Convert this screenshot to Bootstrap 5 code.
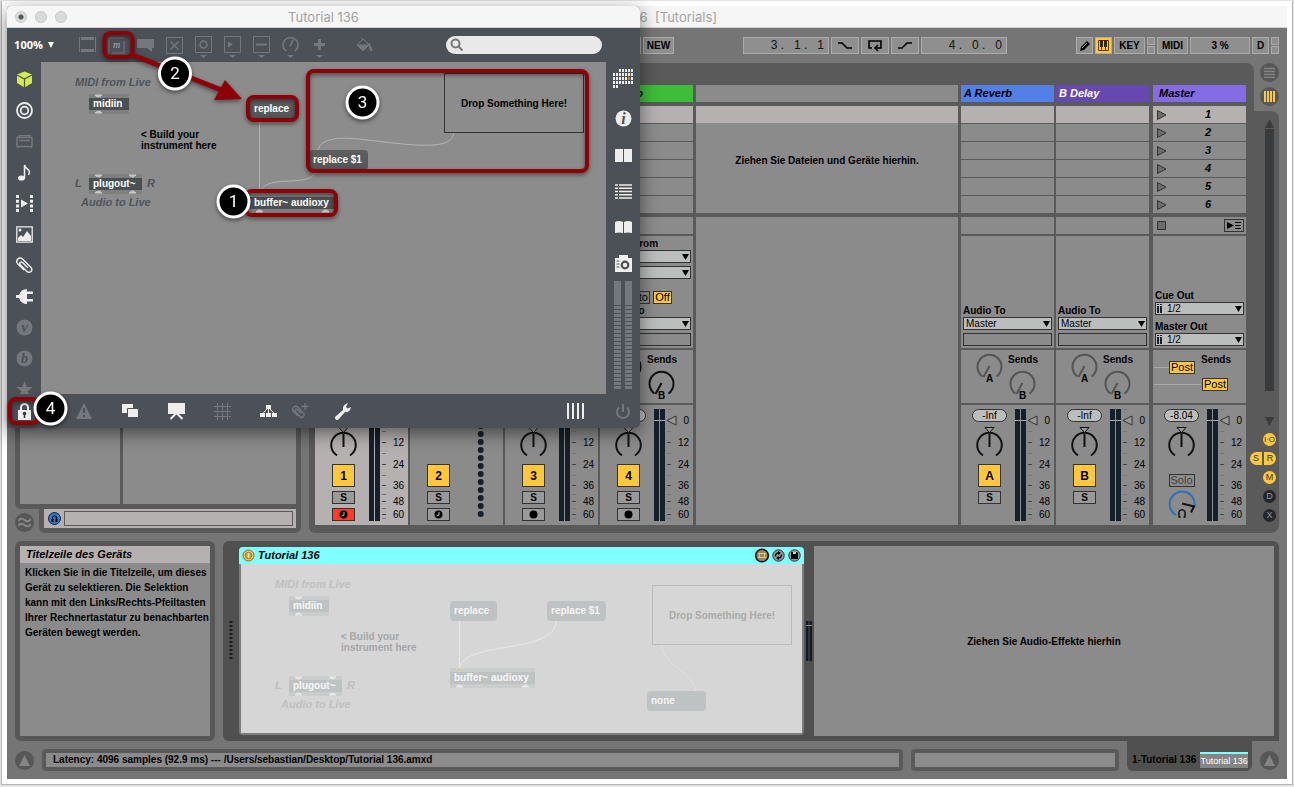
<!DOCTYPE html>
<html lang="de">
<head>
<meta charset="utf-8">
<meta name="viewport" content="width=device-width, initial-scale=1">
<title>Tutorial 136 [Tutorials]</title>
<link href="https://cdn.jsdelivr.net/npm/bootstrap@5.3.0/dist/css/bootstrap.min.css" rel="stylesheet">
<style>
  :root { --bar:#757575; --panel:#5a5a5a; --cell:#8b8b8b; --sel:#b5b1b0; --amber:#ffc83c; --slate:#4c5057; --dim:#74787c; --red:#8e0009; }
  body { background:#e2e2e2; font:bold 10px/11px "Liberation Sans", Arial, sans-serif; color:#000; overflow-x:hidden; }
  button, select, input { font:inherit; color:inherit; padding:0; border:0; background:none; border-radius:0; }
  button { line-height:1; display:flex; align-items:center; justify-content:center; }
  svg { display:block; flex:none; }
  .frame { margin:1px 1px 2px; padding:5px; min-height:calc(100vh - 3px); background:#fff; border:1px solid #b5b5b5; border-top:0; }
  .live { background:var(--bar); }
  .titlebar { height:22px; background:#f6f6f6; border-bottom:1px solid #d0d0d0; font:13px/22px Inter, Roboto, sans-serif; color:#a3a3a3; white-space:pre; }
  .ctl { height:35px; padding-right:8px; gap:2px; }
  .tb { height:17px; border:1px solid #ababab; background:#8f8f8f; font-size:10px; }
  .w17 { width:17px; } .w28 { width:28px; } .w31 { width:31px; } .w60 { width:60px; } .w86 { width:86px; }
  .gapafter { margin-right:67px; }
  .digits { font:12px/15px "Liberation Sans", sans-serif; color:#111; white-space:pre; }
  .mini { width:8px; gap:1px; }
  .mini i { height:8px; border:1px solid #ababab; background:#8f8f8f; }
  .amber { background:var(--amber); }
  .pan { background:var(--panel); }

  .browser { width:286px; }
  .brow-top { padding:5px; gap:3px; border-radius:6px 6px 0 6px; }
  .brow-low { margin-left:5px; padding:0 5px 5px; border-radius:0 0 6px 6px; }
  .preview { height:19px; padding:2px 3px 2px 4px; gap:3px; background:var(--sel); }
  .preview input { height:15px; min-width:0; border:1px solid var(--panel); background:var(--sel); }
  .rnd { width:19px; height:19px; border-radius:50%; background:#575757; }
  .cellbg { background:var(--cell); }

  .session { padding:22px 8px 8px 6px; border-radius:6px 8px 0 6px; gap:2px; }
  .strip { width:93px; }
  .strip.on > .mixer { background:var(--sel); }
  .hd { height:17px; padding:0 3px; font:italic bold 11px/17px "Liberation Sans", sans-serif; margin-bottom:4px; }
  .hd.master { padding-left:6px; }
  .slots { gap:1px; margin-bottom:4px; }
  .slot { height:17px; background:var(--cell); padding:0 4px; }
  .slot:first-child { background:var(--sel); }
  .slot span { font:italic bold 11px/17px "Liberation Sans", sans-serif; padding-right:31px; }
  .cliparea { height:107px; margin-bottom:4px; }
  .cliparea > .first { height:17px; background:var(--sel); }
  .cliparea > .hint { height:74px; }
  .stop { height:17px; background:var(--cell); margin-bottom:2px; padding:0 2px 0 4px; }
  .io { background:var(--cell); padding:2px; margin-bottom:2px; min-height:112px; }
  .io label { display:block; height:12px; line-height:11px; white-space:nowrap; }
  .io select { appearance:none; display:block; width:100%; height:13px; padding:0 12px 0 2px; border:1px solid #333; font-weight:normal; line-height:11px;
    background:#bcbebd url("data:image/svg+xml,%3Csvg xmlns='http://www.w3.org/2000/svg' width='7' height='6'%3E%3Cpath d='M0 0h7L3.5 6z'/%3E%3C/svg%3E") no-repeat right 1px center; }
  .io select.st { padding-left:11px;
    background-image:url("data:image/svg+xml,%3Csvg xmlns='http://www.w3.org/2000/svg' width='7' height='6'%3E%3Cpath d='M0 0h7L3.5 6z'/%3E%3C/svg%3E"), url("data:image/svg+xml,%3Csvg xmlns='http://www.w3.org/2000/svg' width='5' height='9'%3E%3Cpath d='M0 0h2v1H0zM3 0h2v1H3zM0 2h2v7H0zM3 2h2v7H3z' fill='%23182028'/%3E%3C/svg%3E");
    background-position:right 1px center, 1px center; background-repeat:no-repeat; }
  .emptybox { height:13px; border:1px solid #333; }
  .sb { height:13px; border:1px solid #333; font-weight:normal; font-size:11px; }
  .sends { height:53px; background:var(--cell); margin-bottom:2px; }
  .mixer { height:120px; background:var(--cell); padding-top:4px; }
  .mixleft { width:57px; margin-right:-4px; }
  .pill { width:35px; height:13px; border:1px solid #333; border-radius:7px; background:#bcbebd; font:10px/11px "Liberation Sans", sans-serif; text-align:center; }
  .num { width:23px; height:23px; border:1px solid #333; background:var(--amber); font-size:12px; margin-top:5px; }
  .s2 { width:23px; height:13px; border:1px solid #333; background:#999; margin-top:4px; font-size:10px; }
  .drop { margin:0 1px; }

  .side { width:25px; }
  .views { height:48px; gap:5px; }
  .rail { padding-right:3px; border-radius:0 8px 8px 0; }
  .rail .arrow { margin-right:2px; }
  .track { width:9px; min-height:200px; background:#3a3b3d; margin:1px 2px 2px 0; }
  .dot { width:13px; height:13px; border-radius:50%; background:var(--amber); font:9px/13px "Liberation Sans", sans-serif; color:#333; }
  .dot.off { background:#23262a; color:#999; }
  .dot.io3 { font-size:8px; }
  .dot.half { width:12px; border-radius:7px 0 0 7px; }
  .dot.half + .half { border-radius:0 7px 7px 0; }
  .rail .rowx { height:19px; gap:2px; width:26px; }

  .info { width:200px; height:200px; padding:5px; border-radius:6px; background:#575757; }
  .info h2 { font:italic bold 11px/17px "Liberation Sans", sans-serif; background:var(--sel); padding:0 6px; margin:0; }
  .info p { line-height:15px; padding:2px 0 0 5px; margin:0; white-space:pre-line; }
  .devices { height:200px; padding:5px 5px 5px 6px; border-radius:6px 6px 0 6px; background:#505050; }
  .device { width:565px; border-radius:4px; background:#7d7d7d; padding:0 2px 2px; margin:1px 0; }
  .device .head { height:17px; margin:0 -2px; padding:0 3px; background:#7fffff; border-radius:4px 4px 0 0; font:italic bold 11px/17px "Liberation Sans", sans-serif; gap:3px; }
  .patch { position:relative; overflow:hidden; }
  .patch > * { position:absolute; white-space:nowrap; }
  .devbody { background:#d6d6d6; }

  .status { height:38px; padding-left:8px; }
  .status .rnd { margin-top:10px; }
  .sbox { height:22px; padding:4px; border-radius:4px; }
  .sbox > div { height:14px; line-height:14px; padding:0 7px; white-space:nowrap; }
  .tab { width:125px; height:30px; padding:11px 4px 0 5px; border-radius:0 0 6px 6px; background:#505050; gap:4px; line-height:16px; white-space:nowrap; }
  .tab b { height:16px; width:48px; border-top:2px solid #7fffff; background:#858585; color:#fff; font:9px/14px "Liberation Sans", sans-serif; text-align:center; }

  .maxwin { position:absolute; left:7px; top:6px; width:633px; height:422px; background:var(--slate); border-radius:4px 5px 5px 0; box-shadow:0 5px 18px rgba(0,0,0,.5); }
  .maxwin .titlebar { border-radius:4px 5px 0 0; position:relative; }
  .lights { position:absolute; left:8px; top:5px; gap:8px; }
  .lights i { width:12px; height:12px; border-radius:50%; background:#dadada; border:1px solid #c8c8c8; }
  .lights i:first-child { background:radial-gradient(#555 0 2px,#dadada 3px); }
  .tools { height:34px; color:var(--dim); }
  .tools button { width:29px; height:34px; }
  .tools .zoomb { width:54px; color:#fff; font:bold 11px/12px "Open Sans", sans-serif; gap:5px; margin-right:12px; }
  .find { width:156px; height:18px; border-radius:9px; background:#e9e9e9; padding:0 4px; margin-right:38px; }
  .find input { min-width:0; outline:0; }
  .lside { width:34px; padding-top:2px; overflow:hidden; height:332px; color:#eee; }
  .lside button { width:34px; height:31px; flex:none; }
  .rside { width:34px; padding-top:7px; gap:22px; color:#eee; }
  .rside .meter { margin-top:-13px; }
  .canvas { background:#8c8c8c; }
  .bot { height:34px; color:#eee; }
  .bot button { width:46px; height:34px; flex:none; }
  .bot .narrow { width:34px; }
  .bot .tight { width:18px; }
  .dimc { color:var(--dim) !important; }
  .note { font-size:11px; font-style:italic; color:#50545c; }
  .obj { height:20px; padding:0 4px; line-height:12px; color:#fff; border:solid #7f7f7f; border-width:4px 0; background:#4a5052; }
  .msg { height:20px; padding:0 4px; line-height:20px; color:#fff; border-radius:4px; background:linear-gradient(#5f5f5f,#525556); }
  .dropbox { border:1px solid #333; display:flex; align-items:center; justify-content:center; }
  .devbody .note { color:#bfc0c2; }
  .devbody .obj, .devbody .msg { background:#bfc2c2; border-color:#cbcccc; color:#f6f6f6; }
  .devbody .dropbox { color:#aaa; border-color:#bbb; }
  .over { position:absolute; left:0; top:0; overflow:visible; pointer-events:none; filter:drop-shadow(0 2px 2px rgba(0,0,0,.5)); }
</style>
</head>
<body>
<div class="frame d-flex position-relative">
<main class="live flex-grow-1 d-flex flex-column">
  <div class="titlebar text-center">Tutorial 136  [Tutorials]</div>

  <div class="ctl d-flex align-items-center justify-content-end">
    <button class="tb w31" aria-label="Quantize"></button>
    <button class="tb w31 gapafter">NEW</button>
    <div class="tb w86 digits d-flex justify-content-end pe-1">3 .   1 .   1</div>
    <button class="tb w28" aria-label="Punch In"><svg width="16" height="8" fill="none" stroke="#000" stroke-width="1.6"><path d="M1 1h4l5 5h5"/></svg></button>
    <button class="tb w28" aria-label="Loop"><svg width="14" height="13" fill="none" stroke="#000" stroke-width="1.6"><path d="M4 9H1V2h12v7H8M10 6 7 9l3 3"/></svg></button>
    <button class="tb w28" aria-label="Punch Out"><svg width="16" height="8" fill="none" stroke="#000" stroke-width="1.6"><path d="M1 6h4l5-5h5"/></svg></button>
    <div class="tb w86 digits d-flex justify-content-end pe-1 gapafter">4 .   0 .   0</div>
    <button class="tb w17" aria-label="Draw"><svg width="12" height="12"><path d="M1 11l1-4 6-6 3 3-6 6z"/><path d="M3 8l5-5" stroke="#aaa"/></svg></button>
    <button class="tb w17 amber" aria-label="Computer Keyboard"><svg width="11" height="11"><path d="M.5.5h10v10H.5zM3.500 0v11M7.500 0v11" fill="none" stroke="#5a3c00"/><path d="M2 0h3v7H2zM6 0h3v7H6z" fill="#3a2800"/></svg></button>
    <button class="tb w31">KEY</button>
    <span class="mini d-flex flex-column"><i></i><i></i></span>
    <button class="tb w31">MIDI</button>
    <div class="tb w60 text-center lh-base">3 %</div>
    <button class="tb w17">D</button>
    <span class="mini d-flex flex-column"><i></i><i></i></span>
  </div>

  <div class="d-flex flex-grow-1 ps-2 pe-2 gap-2">
    <section class="browser d-flex flex-column flex-shrink-0">
      <div class="brow-top pan flex-grow-1 d-flex"><div class="cellbg" style="width:100px"></div><div class="cellbg flex-grow-1"></div></div>
      <div class="d-flex">
        <button class="rnd mt-1" aria-label="Groove Pool"><svg width="13" height="11" fill="none" stroke="#858585" stroke-width="2"><path d="M0 4q3-4 6.500-1T13 2M0 9q3-4 6.500-1T13 7"/></svg></button>
        <div class="brow-low pan flex-grow-1">
          <div class="preview d-flex align-items-center">
            <button aria-label="Preview"><svg width="13" height="13"><circle cx="6.500" cy="6.500" r="6" fill="#2f76cc" stroke="#123"/><path d="M4.500 8.500V6a2 2 0 0 1 4 0v2.500" fill="none" stroke="#111" stroke-width="1.200"/><path d="M3.500 7h2v3h-2zM7.500 7h2v3h-2z" fill="#111"/></svg></button>
            <input class="flex-grow-1" aria-label="Preview file">
          </div>
        </div>
      </div>
    </section>

    <section class="d-flex flex-grow-1">
      <div class="session pan d-flex flex-grow-1" id="session"></div>
      <div class="side d-flex flex-column">
        <div class="views d-flex flex-column align-items-end">
          <button class="rnd" aria-label="Arrangement"><svg width="11" height="11" stroke="#858585" stroke-width="1.500"><path d="M0 1.500h11M0 4.500h11M0 7.500h11M0 10.500h11"/></svg></button>
          <button class="rnd" aria-label="Session"><svg width="11" height="11" stroke="#ffc83c" stroke-width="2"><path d="M1 0v11M4 0v11M7 0v11M10 0v11"/></svg></button>
        </div>
        <div class="rail pan flex-grow-1 d-flex flex-column align-items-end">
          <svg class="arrow mt-2" width="9" height="9"><path d="M4.500 0 9 9H0z" fill="#3a3b3d"/></svg>
          <div class="track flex-grow-1"></div>
          <svg class="arrow mt-4 mb-1" width="9" height="9"><path d="M4.500 9 9 0H0z" fill="#3a3b3d"/></svg>
          <div class="rowx d-flex align-items-center justify-content-end"><button class="dot io3">I·O</button></div>
          <div class="rowx d-flex align-items-center justify-content-end"><button class="dot half">S</button><button class="dot half">R</button></div>
          <div class="rowx d-flex align-items-center justify-content-end"><button class="dot">M</button></div>
          <div class="rowx d-flex align-items-center justify-content-end"><button class="dot off">D</button></div>
          <div class="rowx d-flex align-items-center justify-content-end mb-2"><button class="dot off">X</button></div>
        </div>
      </div>
    </section>
  </div>

  <div class="d-flex ps-2 pe-2 pt-2 gap-2">
    <section class="info flex-shrink-0"><div class="cellbg h-100"><h2>Titelzeile des Geräts</h2>
<p>Klicken Sie in die Titelzeile, um dieses
Gerät zu selektieren. Die Selektion
kann mit den Links/Rechts-Pfeiltasten
Ihrer Rechnertastatur zu benachbarten
Geräten bewegt werden.</p></div></section>
    <section class="devices flex-grow-1 d-flex">
      <svg class="align-self-center" width="4" height="40" style="margin-right:6px"><path d="M2 0v40" stroke="#181c20" stroke-width="3" stroke-dasharray="2 2"/></svg>
      <div class="device d-flex flex-column flex-shrink-0">
        <div class="head d-flex align-items-center">
          <button aria-label="Device On"><svg width="13" height="13"><circle cx="6.500" cy="6.500" r="5.500" fill="#ffc83c" stroke="#765"/><circle cx="6.500" cy="6.500" r="3.200" fill="#c4a264" stroke="#98794a"/><path d="M6.500 4v5" stroke="#ffe9a0" stroke-width="1.500"/></svg></button>
          <span class="flex-grow-1">Tutorial 136</span>
          <button aria-label="Edit"><svg width="14" height="15"><circle cx="7" cy="7.500" r="6.300" fill="#8f8678" stroke="#111" stroke-width="1.500"/><path d="M4.500 5.500h5v4h-5zM3 5.500h8M3 9.500h8" fill="none" stroke="#ffc83c"/></svg></button>
          <button aria-label="Hot-Swap"><svg width="13" height="13"><circle cx="6.500" cy="6.500" r="5.700" fill="#999" stroke="#333"/><path d="M3.500 7.500q0-3.500 3-3.500M9.500 5.500q0 3.500-3 3.500" fill="none" stroke="#111" stroke-width="1.400"/><path d="M6 2v4l3-2zM7 7v4L4 9z"/></svg></button>
          <button aria-label="Save Preset"><svg width="13" height="13"><circle cx="6.500" cy="6.500" r="5.700" fill="#999" stroke="#333"/><path d="M3 3h6l1 1v6H3z"/><path d="M5 3h3v2H5z" fill="#ccc"/></svg></button>
        </div>
        <div class="devbody patch flex-grow-1">
          <svg style="left:0;top:0" width="561" height="168" viewBox="241 564 561 168" fill="none" stroke="#e8e8e8"><path d="M459.500 620v48M556.500 621C554 655 465 640 459.500 668"/><path d="M661.500 645c2 22 34 28 34 46" stroke="#e2e2e2"/></svg>
          <span class="note" style="left:34px;top:15px">MIDI from Live</span>
          <span class="obj" style="left:48px;top:32px;width:40px">midiin</span>
          <span style="left:100px;top:67px;color:#a6a6a6">&lt; Build your<br>instrument here</span>
          <span class="note" style="left:34px;top:116px">L</span>
          <span class="obj" style="left:48px;top:112px;width:53px">plugout~</span>
          <span class="note" style="left:106px;top:116px">R</span>
          <span class="note" style="left:40px;top:135px">Audio to Live</span>
          <span class="msg" style="left:209px;top:37px;width:47px">replace</span>
          <span class="msg" style="left:306px;top:37px;width:59px">replace $1</span>
          <span class="obj" style="left:209px;top:104px;width:85px">buffer~ audioxy</span>
          <div class="dropbox" style="left:411px;top:21px;width:140px;height:60px">Drop Something Here!</div>
          <span class="msg" style="left:406px;top:127px;width:59px">none</span>
          <svg style="left:0;top:0" width="561" height="168" viewBox="241 564 561 168" fill="#e6e8ea"><path d="M295 597h7q-3.500 4-7 0zM295 615h7q-3.500-4-7 0zM295 677h7q-3.500 4-7 0zM329 677h7q-3.500 4-7 0zM295 695h7q-3.500-4-7 0zM329 695h7q-3.500-4-7 0zM456 687h7q-3.500-4-7 0zM522 687h7q-3.500-4-7 0z" stroke="#e6e8ea"/><path d="M456 669h7q-3.500 4-7 0z" fill="#b9b5a4" stroke="#e0d8c0"/></svg>
        </div>
      </div>
      <svg width="6" height="40" class="align-self-center" style="margin:0 2px"><path d="M0 0h2.500v40H0zM3.500 0H6v40H3.500z" fill="#141b22"/><path d="M0 4.500h6" stroke="#888"/></svg>
      <div class="cellbg flex-grow-1 d-flex align-items-center justify-content-center">Ziehen Sie Audio-Effekte hierhin</div>
    </section>
  </div>

  <footer class="status d-flex align-items-start pe-2 gap-2">
    <button class="rnd" aria-label="Info View"><svg width="13" height="12"><path d="M6.500 0 12 11H1z" fill="#858585"/></svg></button>
    <div class="sbox pan flex-grow-1 mt-2"><div class="cellbg">Latency: 4096 samples (92.9 ms) --- /Users/sebastian/Desktop/Tutorial 136.amxd</div></div>
    <div class="sbox pan mt-2" style="width:208px"><div class="cellbg"></div></div>
    <div class="tab d-flex">1-Tutorial 136<b>Tutorial 136</b></div>
    <button class="rnd" aria-label="Device View"><svg width="13" height="12"><path d="M6.500 0 12 11H1z" fill="#858585"/></svg></button>
  </footer>
</main>
</div>

<div class="maxwin d-flex flex-column">
  <div class="titlebar text-center"><span class="lights d-flex"><i></i><i></i><i></i></span>Tutorial 136</div>
  <div class="tools d-flex align-items-center">
    <button class="zoomb">100% <svg width="6" height="6"><path d="M0 0h6L3 6z" fill="#fff"/></svg></button>
    <button aria-label="Object"><svg width="17" height="18" fill="none" stroke="currentColor"><path d="M.5 1v15M16.500 1v15"/><path d="M2 2.500h13M2 14.500h13" stroke-width="3"/></svg></button>
    <button aria-label="Message"><svg width="17" height="17"><path d="M1 16V1h15M16 4v12H4" fill="none" stroke="currentColor"/><text x="8.500" y="11" text-anchor="middle" font-family="Liberation Serif" font-style="italic" font-weight="400" font-size="10" fill="#aaa">m</text></svg></button>
    <button aria-label="Comment"><svg width="17" height="15"><path d="M0 1h17v9h-2v4l-5-4H0z" fill="currentColor"/></svg></button>
    <button aria-label="Toggle"><svg width="17" height="17" fill="none" stroke="currentColor"><path d="M.5.5h16v16H.5z"/><path d="M4.500 4.500l8 8M12.500 4.500l-8 8" stroke-width="1.500"/></svg></button>
    <button aria-label="Button"><svg width="17" height="26" fill="none" stroke="currentColor"><path d="M.5 4.500h16v16H.5z"/><circle cx="8.500" cy="12.500" r="3.500" stroke-width="1.500"/><path d="M5 23h7l-3.500 3z" fill="currentColor" stroke="none"/></svg></button>
    <button aria-label="Number"><svg width="17" height="26" fill="none" stroke="currentColor"><path d="M.5 4.500h16v16H.5z"/><path d="M4 9.500v6l5-3zM5 23h7l-3.500 3z" fill="currentColor" stroke="none"/></svg></button>
    <button aria-label="Slider"><svg width="17" height="26" fill="none" stroke="currentColor"><path d="M.5 4.500h16v16H.5z"/><path d="M3 12.500h11" stroke-width="2"/><path d="M5 23h7l-3.500 3z" fill="currentColor" stroke="none"/></svg></button>
    <button aria-label="Dial"><svg width="17" height="26" fill="none" stroke="currentColor" stroke-width="1.700"><path d="M4 19a7.500 7.500 0 1 1 9 0M8 14.500l3-7"/><path d="M5 23h7l-3.500 3z" fill="currentColor" stroke="none"/></svg></button>
    <button aria-label="Add"><svg width="17" height="26" fill="none" stroke="currentColor" stroke-width="3"><path d="M8.500 7v11M3 12.500h11"/><path d="M5 23h7l-3.500 3z" fill="currentColor" stroke="none"/></svg></button>
    <button class="ms-3" aria-label="Format"><svg width="17" height="16"><path d="M1 8l6-6 6 6-6 6z" fill="none" stroke="currentColor"/><path d="M1 8h12l-6 6zM13 6q3 5 3 7t-2 0zM5 0l3 3" fill="currentColor" stroke="currentColor" stroke-width=".8"/></svg></button>
    <label class="find d-flex align-items-center ms-auto"><svg width="14" height="14" fill="none" stroke="#777" stroke-width="2"><circle cx="5.500" cy="5.500" r="4"/><path d="M8.500 8.500l4 4"/></svg><input class="flex-grow-1" type="text" aria-label="Search"></label>
  </div>
  <div class="d-flex flex-grow-1">
    <div class="lside d-flex flex-column">
      <button aria-label="Packages"><svg width="17" height="17"><path d="M8.500.5l7.500 3v8.500l-7.500 4.500L1 12V3.500z" fill="#d3ec4b"/><path d="M1 4l7.500 4L16 4M8.500 8v9" fill="none" stroke="#4c5057" stroke-width="1.200"/></svg></button>
      <button aria-label="Target"><svg width="17" height="17" fill="none" stroke="currentColor" stroke-width="1.800"><circle cx="8.500" cy="8.500" r="7.500"/><circle cx="8.500" cy="8.500" r="3.800"/></svg></button>
      <button class="dimc" aria-label="Amp"><svg width="17" height="13" fill="none" stroke="currentColor"><path d="M1 2.500h15v9H1zM3 2V.5h11V2M3 5.500h11M2 11v2M15 11v2" stroke-width="1.500"/></svg></button>
      <button aria-label="Audio"><svg width="14" height="17"><ellipse cx="4.500" cy="14" rx="3.500" ry="2.600" fill="currentColor"/><path d="M7.500 14V1q1 3 3.500 4.500T11.500 11" fill="none" stroke="currentColor" stroke-width="1.500"/></svg></button>
      <button aria-label="Video"><svg width="17" height="17"><path d="M1.500 0v17M15.500 0v17" stroke="currentColor" stroke-width="3" stroke-dasharray="3 1.700"/><path d="M5 4.500v8l7-4z" fill="currentColor"/></svg></button>
      <button aria-label="Images"><svg width="17" height="17"><path d="M.8.800h15.400v15.400H.8z" fill="none" stroke="currentColor" stroke-width="1.300"/><circle cx="4" cy="4" r="1.500" fill="currentColor"/><path d="M2 15v-3l3-3 2 2 4-6 4 5v5z" fill="currentColor"/></svg></button>
      <button aria-label="Attachments"><svg width="17" height="17" fill="none" stroke="currentColor" stroke-width="1.500"><path d="M12 11 6.500 5.500a1.600 1.600 0 0 0-2.300 2.300L11 14.500a2.800 2.800 0 0 0 4-4L6.500 2A3.400 3.400 0 0 0 1.700 6.800L8 13"/></svg></button>
      <button aria-label="Plug-ins"><svg width="17" height="17" fill="currentColor"><path d="M0 7h3q2-6 8-6v15q-6 0-8-6H0zM11 3.500h6v2.500h-6zM11 11h6v2.500h-6z"/></svg></button>
      <button class="dimc" aria-label="Vizzie"><svg width="17" height="17"><circle cx="8.500" cy="8.500" r="8" fill="currentColor"/><text x="8.500" y="13" text-anchor="middle" font-family="Liberation Serif" font-style="italic" font-size="14" fill="#4c5057">v</text></svg></button>
      <button class="dimc" aria-label="Beap"><svg width="17" height="17"><circle cx="8.500" cy="8.500" r="8" fill="currentColor"/><text x="8.500" y="13" text-anchor="middle" font-family="Liberation Serif" font-style="italic" font-size="14" fill="#4c5057">b</text></svg></button>
      <button class="dimc" aria-label="Favourites"><svg width="17" height="17"><path d="M8.500 0l2.300 6h6l-5 4 2 6-5.300-3.600L3.200 16l2-6-5-4h6z" fill="currentColor"/></svg></button>
    </div>
    <div class="canvas patch flex-grow-1">
      <svg style="left:0;top:0" width="565" height="332" viewBox="41 62 565 332" fill="none" stroke="#b4b4b4"><path d="M259.500 120v73M453.500 133C453 160 355 133 334 139Q320 141 318 150M316 170C312 190 264 172 260 193"/></svg>
      <span class="note" style="left:34px;top:15px">MIDI from Live</span>
      <span class="obj" style="left:48px;top:32px;width:40px">midiin</span>
      <span style="left:100px;top:67px">&lt; Build your<br>instrument here</span>
      <span class="note" style="left:34px;top:116px">L</span>
      <span class="obj" style="left:48px;top:112px;width:53px">plugout~</span>
      <span class="note" style="left:106px;top:116px">R</span>
      <span class="note" style="left:40px;top:135px">Audio to Live</span>
      <span class="msg" style="left:209px;top:37px;width:47px">replace</span>
      <span class="msg" style="left:268px;top:88px;width:59px">replace $1</span>
      <span class="obj" style="left:209px;top:131px;width:84px">buffer~ audioxy</span>
      <div class="dropbox" style="left:403px;top:11px;width:140px;height:60px">Drop Something Here!</div>
      <svg style="left:0;top:0" width="565" height="332" viewBox="41 62 565 332" fill="#c8c8c8"><path d="M95 95h7q-3.500 4-7 0zM95 113h7q-3.500-4-7 0zM95 175h7q-3.500 4-7 0zM129 175h7q-3.500 4-7 0zM95 193h7q-3.500-4-7 0zM129 193h7q-3.500-4-7 0zM256 212h7q-3.500-4-7 0zM322 212h7q-3.500-4-7 0z" stroke="#c8c8c8"/></svg>
    </div>
    <div class="rside d-flex flex-column align-items-center">
      <button aria-label="Grid"><svg width="20" height="19"><path d="M6 1.500h14M0 5.500h20M0 9.500h20M0 13.500h20M0 17.500h5" stroke="currentColor" stroke-width="3" stroke-dasharray="2 1"/><path d="M15 8h2v3h-2z" fill="#c08a20"/></svg></button>
      <button aria-label="Inspector"><svg width="17" height="17"><circle cx="8.500" cy="8.500" r="8" fill="currentColor"/><text x="8.500" y="14" text-anchor="middle" font-family="Liberation Serif" font-style="italic" font-weight="bold" font-size="16" fill="#4c5057">i</text></svg></button>
      <button aria-label="Reference"><svg width="17" height="13"><path d="M0 0h8v13H0zM9 0h8v13H9z" fill="currentColor"/></svg></button>
      <button aria-label="Console"><svg width="17" height="15" stroke="currentColor" stroke-width="1.500"><path d="M0 1h3M4 1h13M0 4.200h3M4 4.200h13M0 7.500h3M4 7.500h13M0 10.700h3M4 10.700h13M0 14h3M4 14h13"/></svg></button>
      <button aria-label="Lessons"><svg width="17" height="12"><path d="M0 1q4-2 8 0v11q-4-1-8 0zM9 1q4-2 8 0v11q-4-1-8 0z" fill="currentColor"/></svg></button>
      <button aria-label="Snapshots"><svg width="17" height="17"><path d="M4 0h9v3h4v14H0V3h4z" fill="currentColor"/><circle cx="10" cy="10" r="3.300" fill="none" stroke="#4c5057" stroke-width="2.200"/><path d="M1.500 6h3M1.500 9h3M1.500 12h3" stroke="#4c5057"/></svg></button>
      <svg class="meter" width="18" height="109" fill="#74787c"><path d="M0 0h7v24H0zM11 0h7v24h-7z"/><path d="M3.500 25v84M14.500 25v84" stroke="#74787c" stroke-width="7" stroke-dasharray="3 1"/></svg>
    </div>
  </div>
  <div class="bot d-flex align-items-center">
    <button class="narrow" aria-label="Lock" style="margin-right:20px"><svg width="13" height="17"><path d="M0 7h13v10H0z" fill="currentColor"/><path d="M3 8V4.500a3.500 3.500 0 0 1 7 0V8" fill="none" stroke="currentColor" stroke-width="2"/><circle cx="6.500" cy="10.500" r="1.700" fill="#333"/><path d="M6.500 10v5" stroke="#333" stroke-width="1.500"/></svg></button>
    <button class="dimc" aria-label="Errors"><svg width="16" height="16"><path d="M8 0l8 16H0z" fill="currentColor"/><path d="M8 5v5M8 12v2" stroke="#4c5057" stroke-width="2"/></svg></button>
    <button aria-label="Windows"><svg width="17" height="15"><path d="M0 0h11v9H0z" fill="currentColor"/><path d="M5.500 4.500h11v9h-11z" fill="currentColor" stroke="#4c5057"/></svg></button>
    <button aria-label="Presentation"><svg width="17" height="17"><path d="M0 0h17v11H0z" fill="currentColor"/><path d="M8.500 10l-6 6M8.500 10l6 6" stroke="currentColor" stroke-width="2"/></svg></button>
    <button class="dimc" aria-label="Snap"><svg width="17" height="17" stroke="currentColor"><path d="M3.500 0v17M8.500 0v17M13.500 0v17M0 3.500h17M0 8.500h17M0 13.500h17"/></svg></button>
    <button aria-label="Connections"><svg width="17" height="13"><path d="M6 0h5v4H6zM0 8h5v4H0zM6 8h5v4H6zM12 8h5v4h-5z" fill="currentColor"/><path d="M8.500 3v6M7 4 2.500 9M10 4l4.500 5" stroke="currentColor"/></svg></button>
    <button class="dimc tight" aria-label="Attach"><svg width="17" height="18" fill="none" stroke="currentColor" stroke-width="1.300"><path d="M9 11 5.500 7.500a1.200 1.200 0 0 0-2 2L8 14.500a2.200 2.200 0 0 0 3.500-3L6 5.500A3 3 0 0 0 1.500 9.500L6 14M13 1v7M9.500 4.500h7"/></svg></button>
    <button class="tight ms-4" aria-label="Tools"><svg width="17" height="17"><path d="M1 14 9 7q-1-5 5-7l-2 4 1.500 1.500L17 4q-1 6-6 5l-7 8q-3 1-3-3z" fill="currentColor"/></svg></button>
    <button class="ms-auto me-2" aria-label="Transport"><svg width="17" height="16" stroke="currentColor" stroke-width="2"><path d="M1 0v16M6 0v16M11 0v16M16 0v16"/></svg></button>
    <button class="dimc narrow" aria-label="Power"><svg width="16" height="17" fill="none" stroke="currentColor" stroke-width="2"><path d="M4 4.500a6 6 0 1 0 8 0M8 1v8"/></svg></button>
  </div>

  <svg class="over" width="633" height="422" viewBox="7 6 633 422" fill="none" stroke="#8e0009" stroke-width="4">
    <rect x="104.500" y="33" width="28" height="24" rx="6"/>
    <rect x="248" y="97" width="49" height="23" rx="6"/>
    <rect x="308" y="71" width="279" height="100" rx="6"/>
    <rect x="246" y="191" width="90" height="24" rx="6"/>
    <rect x="10" y="399" width="28" height="24" rx="6"/>
    <path d="M130 54l94 37" stroke-width="5"/>
    <path d="M225 80l17 19-28 1z" fill="#8e0009" stroke="none"/>
    <g fill="#000" stroke="#fff" stroke-width="3"><circle cx="233.500" cy="201.500" r="15.500"/><circle cx="175" cy="73.500" r="15.500"/><circle cx="362.500" cy="102.500" r="15.500"/><circle cx="50.500" cy="408.500" r="15.500"/></g>
    <g fill="#fff" stroke="none" font-family="Roboto, sans-serif" font-weight="400" font-size="17" text-anchor="middle"><text x="233.500" y="207">1</text><text x="175" y="79">2</text><text x="362.500" y="108">3</text><text x="50.500" y="414">4</text></g>
  </svg>
</div>

<script>
  // Level scale next to every mixer meter: [dB label, y]
  const scale = () => {
    const marks = [[0,11],[12,33],[24,55],[36,76],[48,92],[60,105]];
    const minor = [0,22,44,66,85,99,109];
    return `<svg width="40" height="116"><path d="M1 0h5v112H1zM7 0h5v112H7z" fill="#16202a"/><path d="M1 11.500h11" stroke="#aaa"/>
      <path d="M23 7v9l-9-4.500z" fill="#999" stroke="#333"/>
      ${minor.map(y => `<path d="M14 ${y}.500h4" stroke="#777"/>`).join('')}
      ${marks.map(([n,y]) => `${n ? `<path d="M14 ${y}.500h4" stroke="#444"/>` : ''}<text x="36" y="${y+4}" text-anchor="end" font-size="10" font-weight="400">${n}</text>`).join('')}</svg>`;
  };
  const pan = () => `<svg width="29" height="34" fill="none" stroke="#111" style="margin-top:3px"><path d="M8 30.500a12.300 12.300 0 1 1 13 0" stroke-width="2"/><path d="M14.500 9v13" stroke-width="2"/><path d="M10 2.500h9L14.500 7.500z" fill="#999"/></svg>`;
  const sends = dark => {
    const c = dark ? '#111' : '#555';
    return `<svg width="93" height="53" fill="none" stroke="${c}" stroke-width="2"><path d="M21.500 26.500a12 12 0 1 1 14 0M28.500 16l-6 11M54.500 43.500a12 12 0 1 1 14 0M61.500 33l-6 11"/>
      <g fill="#000" stroke="none" font-size="10" font-weight="700"><text x="28.500" y="32" text-anchor="middle">A</text><text x="61.500" y="49" text-anchor="middle">B</text><text x="47" y="13">Sends</text></g></svg>`;
  };
  const arm = kind => kind === 'midi'
    ? '<svg width="9" height="9"><circle cx="4.500" cy="4.500" r="4"/><path d="M5 2v3L2.500 6" stroke="#bbb" fill="none"/></svg>'
    : '<svg width="9" height="9"><circle cx="4.500" cy="4.500" r="4"/></svg>';
  const sel = (id, label, value, cls = '') => `<label for="${id}">${label}</label><select id="${id}" class="${cls}"><option>${value}</option></select>`;

  const tracks = [
    { id:'1', on:true, arm:'midi', rec:true, meter:true },
    { id:'2', arm:'midi' },
    { id:'3', arm:'audio', meter:true },
    { id:'4', name:'4 Audio', color:'#3dbd39', arm:'audio', meter:true, full:true },
    { drop:true },
    { id:'A', name:'A Reverb', color:'#5380e6', meter:true, ret:true, val:'-Inf' },
    { id:'B', name:'B Delay', color:'#6549b0', ink:'#fff', meter:true, ret:true, val:'-Inf' },
    { id:'M', name:'Master', color:'#856be4', meter:true, master:true, val:'-8.04' }
  ];

  const io = t => {
    if (t.ret) return `${sel('to'+t.id,'Audio To','Master')}<div class="emptybox" style="margin-top:3px"></div>`;
    if (t.master) return `${sel('cue','Cue Out','1/2','st')}<div style="height:6px"></div>${sel('mout','Master Out','1/2','st')}`;
    if (t.full) return `${sel('from','Audio From','')}<select aria-label="Input channel" style="margin-top:3px"><option></option></select>
      <div class="d-flex" style="margin:12px 0 1px;gap:3px;padding-left:21px"><button class="sb" style="width:27px">Auto</button><button class="sb amber" style="width:19px">Off</button></div>
      ${sel('to4','Audio To','')}<div class="emptybox" style="margin-top:3px"></div>`;
    return '';
  };
  const mid = t => {
    if (t.master) return `<svg width="93" height="53"><path d="M1 17.500h15M1 34.500h47" stroke="#aaa"/><text x="48" y="13" font-size="10" font-weight="700">Sends</text>
      <rect x="16.500" y="11.500" width="25" height="12" fill="#ffc83c" stroke="#333"/><rect x="49.500" y="28.500" width="25" height="12" fill="#ffc83c" stroke="#333"/>
      <g font-size="11" font-weight="400" text-anchor="middle"><text x="29" y="21">Post</text><text x="62" y="38">Post</text></g></svg>`;
    return t.ret || t.full ? sends(t.full) : '';
  };
  const left = t => {
    if (t.master) return `<div class="pill">${t.val}</div>${pan()}
      <button class="sb" style="width:26px;margin-top:15px;color:#444">Solo</button>
      <svg width="30" height="31" fill="none" style="margin-top:2px"><path d="M9 26a12.500 12.500 0 1 1 18.500-9" stroke="#2f70b8" stroke-width="2"/><path d="M15 14.500l12 3-3 6" stroke="#111" stroke-width="2"/><path d="M13.500 28h-1.500v-3a3.200 3.200 0 1 1 6 0v3h-1.500" stroke="#111" stroke-width="1.500"/></svg>`;
    return `<div class="pill">${t.val || ''}</div>${t.meter ? pan() : '<div style="height:37px"></div>'}
      <button class="num">${t.id}</button><button class="s2">S</button>
      ${t.arm ? `<button class="s2" aria-label="Arm" style="${t.rec ? 'background:#ff3a26' : ''}">${arm(t.arm)}</button>` : ''}`;
  };
  const strip = t => {
    if (t.drop) return `<div class="drop flex-grow-1 d-flex flex-column">
      <div class="hd cellbg"></div>
      <div class="cliparea cellbg"><div class="first"></div><div class="hint d-flex align-items-center justify-content-center">Ziehen Sie Dateien und Geräte hierhin.</div></div>
      <div class="cellbg flex-grow-1"></div></div>`;
    return `<div class="strip d-flex flex-column flex-shrink-0 ${t.on ? 'on' : ''}" ${t.master ? 'style="margin-left:2px"' : ''}>
      <div class="hd ${t.color ? '' : 'cellbg'} ${t.master ? 'master' : ''}" style="background:${t.color || ''};color:${t.ink || '#000'}">${t.name || ''}</div>
      <div class="slots d-flex flex-column">${[1,2,3,4,5,6].map(n => `<div class="slot d-flex align-items-center justify-content-between">${t.master ? `<svg width="10" height="10"><path d="M.5.5v9l8.500-4.500z" fill="#6c6c6c" stroke="#333"/></svg><span>${n}</span>` : ''}</div>`).join('')}</div>
      <div class="stop d-flex align-items-center justify-content-between">${t.master ? '<svg width="9" height="9"><path d="M.5.500h8v8h-8z" fill="#6c6c6c" stroke="#333"/></svg><button class="sb" style="width:20px" aria-label="Back to Arrangement"><svg width="14" height="7"><path d="M0 0v7l7-3.500z"/><path d="M8 .5h6M8 3.500h6M8 6.500h6" stroke="#000"/></svg></button>' : ''}</div>
      <div class="io flex-grow-1 d-flex flex-column justify-content-end">${io(t)}</div>
      <div class="sends">${mid(t)}</div>
      <div class="mixer d-flex"><div class="mixleft d-flex flex-column align-items-center">${left(t)}</div>
      ${t.meter ? scale() : '<svg width="40" height="116"><path d="M17.700 17v96" stroke="#16202a" stroke-width="6" stroke-linecap="round" stroke-dasharray="0.1 7.9"/></svg>'}</div>
    </div>`;
  };
  document.getElementById('session').innerHTML = tracks.map(strip).join('');
</script>
<script src="https://cdn.jsdelivr.net/npm/bootstrap@5.3.0/dist/js/bootstrap.bundle.min.js"></script>
</body>
</html>
